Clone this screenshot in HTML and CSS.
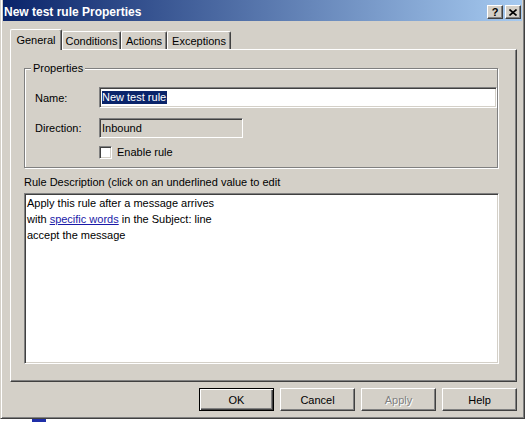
FILE: index.html
```html
<!DOCTYPE html>
<html>
<head>
<meta charset="utf-8">
<link rel="stylesheet" href="styles.css">
</head>
<body>
<div class="window">
  <div class="titlebar">
    <span class="title">New test rule Properties</span>
    <div class="caps">
      <span class="cap help">?</span>
      <span class="cap close"><svg width="8" height="7" viewBox="0 0 8 7"><path d="M0.5 0.5 L7.5 6.5 M7.5 0.5 L0.5 6.5" stroke="#000" stroke-width="1.6" fill="none"/></svg></span>
    </div>
  </div>
  <div class="tabs">
    <div class="tab active t-general">General</div>
    <div class="tab t-cond">Conditions</div>
    <div class="tab t-act">Actions</div>
    <div class="tab t-exc">Exceptions</div>
  </div>
  <div class="panel">
    <fieldset class="group">
      <legend>Properties</legend>
      <div class="row row-name">
        <span class="lbl">Name:</span>
        <div class="edit"><span class="sel">New test rule</span></div>
      </div>
      <div class="row row-dir">
        <span class="lbl">Direction:</span>
        <div class="edit readonly">Inbound</div>
      </div>
      <div class="row row-chk">
        <span class="lbl"></span>
        <span class="check"></span>
        <span class="chk-text">Enable rule</span>
      </div>
    </fieldset>
    <div class="desc-label">Rule Description (click on an underlined value to edit</div>
    <div class="desc">
      <div>Apply this rule after a message arrives</div>
      <div>with <a class="link">specific words</a> in the Subject: line</div>
      <div>accept the message</div>
    </div>
  </div>
  <div class="buttons">
    <button class="btn default">OK</button>
    <button class="btn">Cancel</button>
    <button class="btn disabled">Apply</button>
    <button class="btn">Help</button>
  </div>
</div>
<div class="under"><span class="blue"></span></div>
</body>
</html>
```
FILE: styles.css
```css
* { box-sizing: border-box; }
html, body { margin: 0; padding: 0; }
body {
  width: 527px;
  height: 422px;
  overflow: hidden;
  background: #fff;
  font-family: "Liberation Sans", Arial, sans-serif;
  font-size: 11px;
  color: #000;
}
.window {
  width: 525px;
  height: 419px;
  background: #d4d0c8;
  border: 1px solid;
  border-top: 0;
  border-color: #d4d0c8 #404040 #404040 #d4d0c8;
  box-shadow: inset 1px 0 0 #fff, inset -1px -1px 0 #808080;
  padding: 0 2px 2px 2px;
  display: flex;
  flex-direction: column;
}
.titlebar {
  height: 21px;
  flex: none;
  background: linear-gradient(to right, #0a246a, #a6caf0);
  display: flex;
  align-items: center;
  justify-content: space-between;
  padding: 3px 1px 0 1px;
}
.title {
  color: #fff;
  font-weight: bold;
  font-size: 12px;
  line-height: 14px;
}
.caps { display: flex; gap: 2px; }
.cap {
  width: 16px;
  height: 14px;
  background: #d4d0c8;
  border: 1px solid;
  border-color: #fff #404040 #404040 #fff;
  box-shadow: inset -1px -1px 0 #808080;
  display: flex;
  align-items: center;
  justify-content: center;
  font-weight: bold;
  font-size: 11px;
  line-height: 12px;
}
.tabs {
  display: flex;
  align-items: flex-end;
  height: 20px;
  margin: 8px 0 0 7px;
  position: relative;
  z-index: 1;
  flex: none;
}
.tab {
  height: 18px;
  border-top: 1px solid #fff;
  border-left: 1px solid #fff;
  border-right: 1px solid #404040;
  box-shadow: inset -1px 0 0 #808080;
  border-radius: 2px 2px 0 0;
  text-align: center;
  padding-top: 3px;
  line-height: 13px;
  background: #d4d0c8;
}
.tab.active {
  height: 21px;
  margin-bottom: -1px;
  padding-top: 4px;
}
.t-general { width: 52px; }
.t-cond { width: 59px; }
.t-act { width: 46px; }
.t-exc { width: 64px; }
.panel {
  margin: 0 5px 0 7px;
  height: 333px;
  flex: none;
  border: 1px solid;
  border-color: #fff #404040 #404040 #fff;
  box-shadow: inset -1px -1px 0 #808080;
  padding: 0 0 0 13px;
}
.group {
  margin: 11px 0 0 0;
  width: 474px;
  border: 1px solid #808080;
  box-shadow: inset 1px 1px 0 #fff, 1px 1px 0 #fff;
  padding: 0 0 8px 0;
}
.group legend {
  margin-left: 6px;
  padding: 0 2px;
  line-height: 14px;
  background: #d4d0c8;
}
.row {
  display: flex;
  align-items: center;
}
.lbl {
  width: 64px;
  margin-left: 10px;
  flex: none;
}
.row-name { margin-top: 12px; height: 21px; }
.row-dir { margin-top: 10px; height: 20px; }
.row-chk { margin-top: 8px; height: 13px; }
.edit {
  height: 100%;
  background: #fff;
  border: 1px solid;
  border-color: #808080 #fff #fff #808080;
  box-shadow: inset 1px 1px 0 #404040, inset -1px -1px 0 #d4d0c8;
  padding: 0 0 0 2px;
  display: flex;
  align-items: center;
}
.row-name .edit { flex: 1; }
.sel {
  background: #0a246a;
  color: #fff;
  line-height: 13px;
  padding: 0 1px 0 0;
}
.edit.readonly {
  width: 144px;
  background: #d4d0c8;
}
.check {
  width: 13px;
  height: 13px;
  flex: none;
  background: #fff;
  border: 1px solid;
  border-color: #808080 #fff #fff #808080;
  box-shadow: inset 1px 1px 0 #404040, inset -1px -1px 0 #d4d0c8;
}
.chk-text { margin-left: 5px; line-height: 13px; }
.desc-label {
  margin-top: 8px;
  line-height: 13px;
  height: 13px;
}
.desc {
  margin-top: 4px;
  width: 475px;
  height: 171px;
  background: #fff;
  border: 1px solid;
  border-color: #808080 #fff #fff #808080;
  box-shadow: inset 1px 1px 0 #404040, inset -1px -1px 0 #d4d0c8;
  padding: 1px 0 0 2px;
  line-height: 16px;
}
.link {
  color: #1a1aa8;
  text-decoration: underline;
}
.buttons {
  display: flex;
  justify-content: flex-end;
  gap: 6px;
  margin: 6px 5px 0 0;
}
.btn {
  width: 75px;
  height: 23px;
  font-family: "Liberation Sans", Arial, sans-serif;
  font-size: 11px;
  color: #000;
  background: #d4d0c8;
  border: 1px solid;
  border-color: #fff #404040 #404040 #fff;
  box-shadow: inset -1px -1px 0 #808080;
  padding: 0;
  margin: 0;
}
.btn.default {
  border: 1px solid #000;
  box-shadow: inset 1px 1px 0 #fff, inset -1px -1px 0 #404040, inset -2px -2px 0 #808080;
}
.btn.disabled {
  color: #808080;
  text-shadow: 1px 1px 0 #fff;
}
.under {
  height: 3px;
  display: flex;
  padding-left: 32px;
}
.blue {
  width: 14px;
  height: 3px;
  background: #1f2fa8;
}
```
